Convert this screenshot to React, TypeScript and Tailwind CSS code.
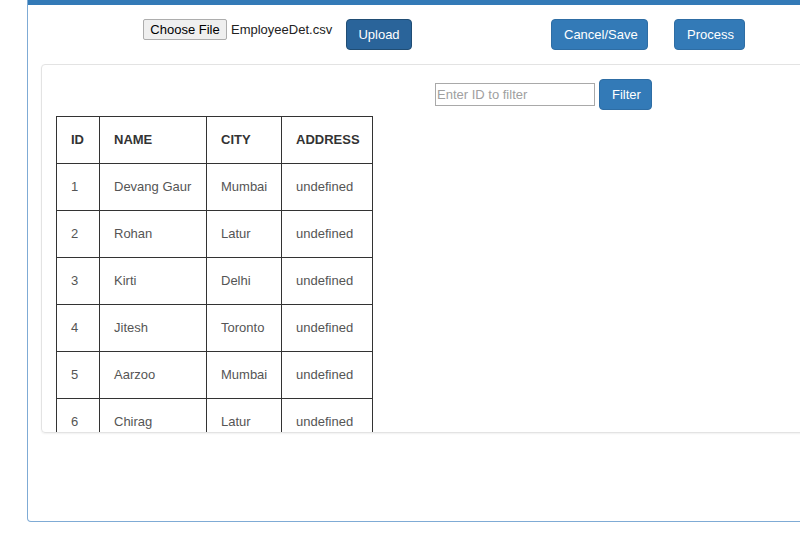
import React from "react";

const rows = [
  { id: 1, name: "Devang Gaur", city: "Mumbai", address: "undefined" },
  { id: 2, name: "Rohan", city: "Latur", address: "undefined" },
  { id: 3, name: "Kirti", city: "Delhi", address: "undefined" },
  { id: 4, name: "Jitesh", city: "Toronto", address: "undefined" },
  { id: 5, name: "Aarzoo", city: "Mumbai", address: "undefined" },
  { id: 6, name: "Chirag", city: "Latur", address: "undefined" },
];

const btn =
  "h-[31px] rounded-[4px] border border-[#2e6da4] bg-[#337ab7] px-3 text-[13px] text-white";

export default function App() {
  return (
    <div className="h-[551px] w-[800px] overflow-hidden bg-white pl-[27px] font-['Liberation_Sans',Arial,sans-serif]">
      <div className="h-[522px] w-[900px] rounded-b-[4px] border-x border-b border-[#7fabd5]">
        {/* heading strip */}
        <div className="h-[5px] bg-[#337ab7]" />

        <div className="px-[13px]">
          {/* top actions */}
          <div className="flex items-start pt-[14px]">
            <div className="ml-[102px] flex w-[203px] items-center">
              <span className="flex h-[21px] w-[84px] items-center justify-center rounded-[2px] border border-[#adadad] bg-[#efefef] text-[13px] text-black">
                Choose File
              </span>
              <span className="ml-[4px] text-[13px] text-[#222]">EmployeeDet.csv</span>
            </div>
            <button className="h-[31px] w-[66px] rounded-[4px] border border-[#204d74] bg-[#2a649a] text-[13px] text-white">
              Upload
            </button>
            <button className={`${btn} ml-[139px] w-[97px]`}>Cancel/Save</button>
            <button className={`${btn} ml-[26px] w-[71px]`}>Process</button>
          </div>

          {/* data panel */}
          <div className="mt-[14px] h-[369px] w-[860px] overflow-hidden rounded-[4px] border border-[#e3e3e3] shadow-[0_1px_2px_rgba(0,0,0,0.06)]">
            <div className="flex items-center pl-[393px] pt-[14px]">
              <input
                placeholder="Enter ID to filter"
                className="h-[23px] w-[160px] border border-[#a9a9a9] px-[1px] text-[13px] outline-none placeholder:text-[#a0a0a0]"
              />
              <button className={`${btn} ml-[4px] w-[53px]`}>Filter</button>
            </div>

            <table className="ml-[14px] mt-[6px] border-collapse text-[13px]">
              <thead>
                <tr className="h-[47px]">
                  <th className="w-[43px] border border-[#333] pl-[14px] text-left font-bold text-[#333]">ID</th>
                  <th className="w-[107px] border border-[#333] pl-[14px] text-left font-bold text-[#333]">NAME</th>
                  <th className="w-[75px] border border-[#333] pl-[14px] text-left font-bold text-[#333]">CITY</th>
                  <th className="w-[91px] border border-[#333] pl-[14px] text-left font-bold text-[#333]">ADDRESS</th>
                </tr>
              </thead>
              <tbody>
                {rows.map((r) => (
                  <tr key={r.id} className="h-[47px] text-[#555]">
                    <td className="border border-[#333] pl-[14px]">{r.id}</td>
                    <td className="border border-[#333] pl-[14px]">{r.name}</td>
                    <td className="border border-[#333] pl-[14px]">{r.city}</td>
                    <td className="border border-[#333] pl-[14px]">{r.address}</td>
                  </tr>
                ))}
              </tbody>
            </table>
          </div>
        </div>
      </div>
    </div>
  );
}
